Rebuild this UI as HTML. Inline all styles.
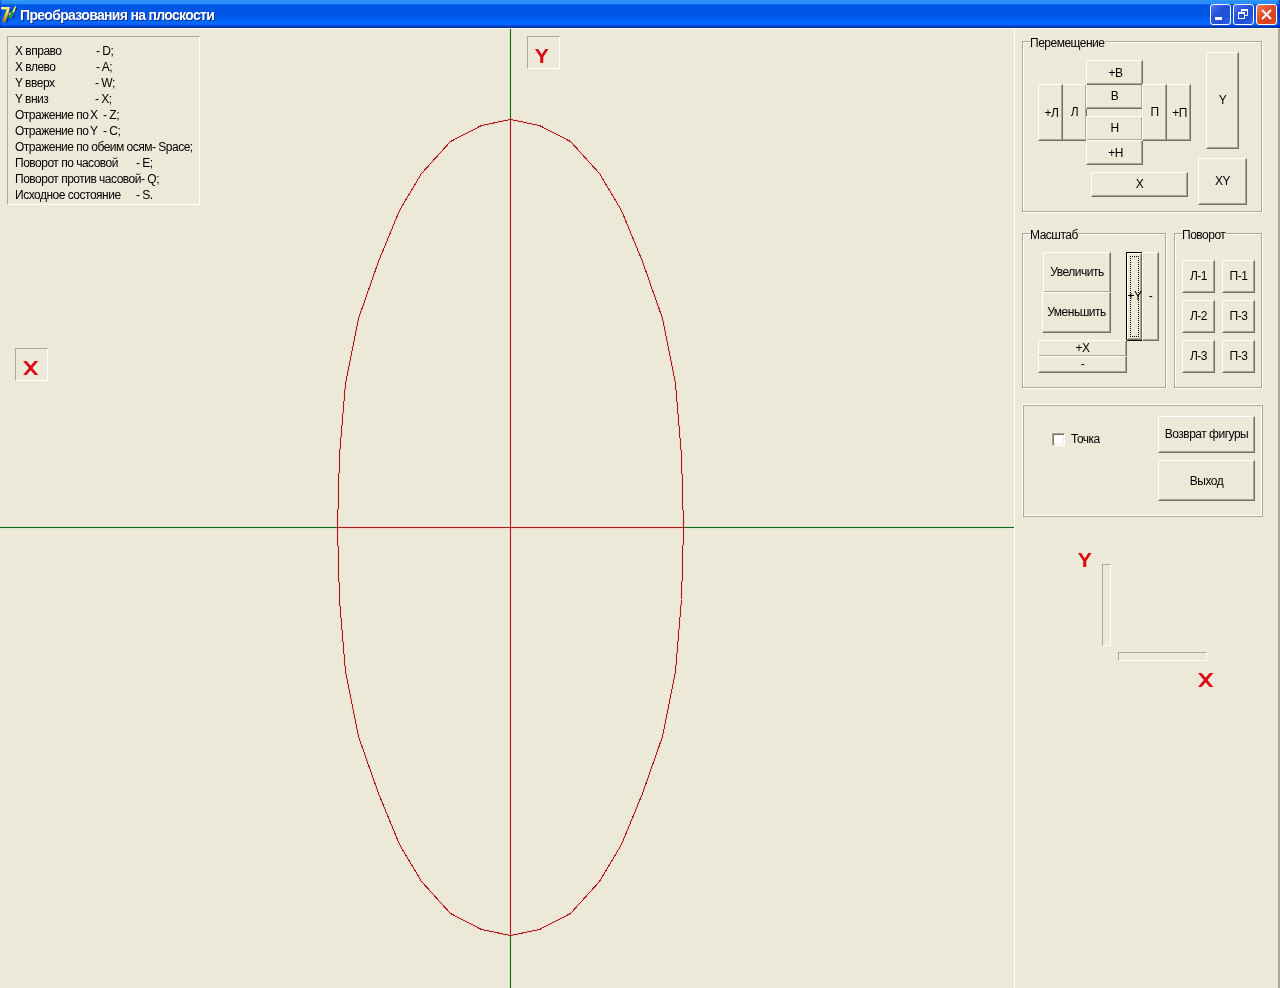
<!DOCTYPE html>
<html><head><meta charset="utf-8">
<style>
html,body{margin:0;padding:0;}
body{width:1280px;height:988px;overflow:hidden;background:#ECE9D8;position:relative;font-family:"Liberation Sans",sans-serif;font-size:12px;letter-spacing:-0.5px;color:#000;}
.abs{position:absolute;}
#title{position:absolute;left:0;top:0;width:1280px;height:28px;background:linear-gradient(to bottom,#3399FF 0.5px,#2486F0 1.5px,#3196FF 2.5px,#2688FA 3.5px,#0A66EE 4.5px,#005AE8 5.5px,#0056E4 6.5px,#0055E2 10.5px,#0057E6 14.5px,#005AEC 17.5px,#0062F6 19.5px,#0068FF 21.5px,#0866FF 23.5px,#0A60F8 24.5px,#0452DE 25.5px,#003ABC 26.5px,#0030A8 27.5px);}
#title .txt{position:absolute;left:20px;top:7px;font-size:14px;line-height:16px;font-weight:bold;color:#fff;text-shadow:1px 1px 0 #0A2F8C;white-space:nowrap;letter-spacing:-0.68px;}
.tb{position:absolute;top:4px;width:21px;height:21px;border-radius:3px;box-sizing:border-box;border:1px solid #fff;}
.tbb{background:linear-gradient(135deg,#5078F0 0%,#2452DC 40%,#2050D8 70%,#3666E8 100%);}
.tbr{background:linear-gradient(135deg,#F08060 0%,#E0502A 40%,#D8401A 70%,#E8501C 100%);}
#lefttop{position:absolute;left:0;top:28px;width:1278px;height:1px;background:#fff;}
#rp{position:absolute;left:1014px;top:28px;width:266px;height:960px;box-sizing:border-box;border-left:1px solid #fff;border-top:1px solid #fff;border-right:2px solid #ACA899;}
.gb{position:absolute;box-sizing:border-box;border:1px solid #ACA899;box-shadow:1px 1px 0 #fff, inset 1px 1px 0 #fff;}
.frame{position:absolute;box-sizing:border-box;border-top:1px solid #fff;border-left:1px solid #fff;border-right:1px solid #ACA899;border-bottom:1px solid #ACA899;box-shadow:inset 1px 1px 0 #ACA899, inset -1px -1px 0 #fff;}
.gbc{position:absolute;background:#ECE9D8;white-space:nowrap;line-height:13px;height:13px;padding:0;}
.btn{position:absolute;box-sizing:border-box;border-top:1px solid #fff;border-left:1px solid #fff;border-right:1px solid #716F64;border-bottom:1px solid #716F64;background:#ECE9D8;}
.btn::before{content:"";position:absolute;left:0;top:0;right:0;bottom:0;border-right:1px solid #ACA899;border-bottom:1px solid #ACA899;}
.btn span{position:absolute;left:0;right:0;line-height:13px;height:13px;text-align:center;white-space:nowrap;}
.foc{border:1px solid #000;overflow:hidden;}
.foc::before{left:0;top:0;right:0;bottom:0;border:1px solid #716F64;border-top-color:#fff;border-left-color:#fff;box-shadow:inset -1px -1px 0 #ACA899;}
.foc::after{content:"";position:absolute;left:3px;top:3px;right:3px;bottom:3px;border:1px dotted #000;}
.sunk{position:absolute;box-sizing:border-box;border-top:1px solid #ACA899;border-left:1px solid #ACA899;border-right:1px solid #fff;border-bottom:1px solid #fff;}
.chk{position:absolute;width:13px;height:13px;box-sizing:border-box;border-top:1px solid #ACA899;border-left:1px solid #ACA899;border-right:1px solid #fff;border-bottom:1px solid #fff;background:#fff;box-shadow:inset 1px 1px 0 #716F64, inset -1px -1px 0 #F1EFE2;}
.ln{position:absolute;white-space:nowrap;line-height:13px;}
.ln,.btn span,.gbc,#title .txt{will-change:transform;}
</style></head><body>
<div id="title">
<svg class="abs" style="left:0;top:0" width="20" height="28" viewBox="0 0 20 28"><defs><linearGradient id="g7" x1="0" y1="0" x2="0" y2="1"><stop offset="0" stop-color="#FFF080"/><stop offset="0.45" stop-color="#F2D22A"/><stop offset="1" stop-color="#A88008"/></linearGradient></defs><path d="M6.4 22.4 L10.4 9.8 L10.6 7.4 L11 10 L7.2 22.6 Z" fill="#101038"/><path d="M1 7 H9.8 L9.4 9.4 L5.4 22 H2 L6.6 9.4 H1 Z" fill="url(#g7)"/><path d="M1 7 H3.5 V8.6 H1 Z" fill="#FFFBD8"/><ellipse cx="10.8" cy="14.8" rx="2" ry="3.7" transform="rotate(28 10.8 14.8)" fill="#2A922A"/><circle cx="9.8" cy="13.8" r="1.4" fill="#B8A094"/><path d="M12.2 12.4 L13.4 9 L15.6 5.8 L16.4 7 L15 9.2 L15.4 10.6 L13.6 12.6 Z" fill="#F4EE58"/><path d="M16 8 L16.9 8.6 L15.6 11.6 L14.2 12.6 L15.6 10.4 Z" fill="#0C0C30"/><path d="M13.2 16.6 L14.4 14.2 L14.6 16.4 L13.2 19 Z" fill="#10103C" opacity="0.85"/><path d="M9 19.5 L11.5 18.6 L9.8 20.6 Z" fill="#10103C" opacity="0.7"/></svg>
<div class="abs" style="left:1277px;top:0;width:3px;height:28px;background:linear-gradient(to right,rgba(0,30,160,0),rgba(0,30,160,0.75))"></div><div class="abs" style="left:0;top:0;width:2px;height:28px;background:linear-gradient(to left,rgba(0,30,160,0),rgba(0,30,160,0.5))"></div><div class="txt">Преобразования на плоскости</div>
<div class="tb tbb" style="left:1210px"><div class="abs" style="left:4px;top:12px;width:7px;height:3px;background:#fff"></div></div>
<div class="tb tbb" style="left:1233px"><svg class="abs" style="left:0;top:0" width="19" height="19"><path d="M7.5 7 V4.5 H13.5 V10.5 H11" fill="none" stroke="#fff" stroke-width="1"/><path d="M7 5 H14" stroke="#fff" stroke-width="2"/><rect x="4.5" y="7.5" width="6" height="6" fill="none" stroke="#fff" stroke-width="1"/><path d="M4 8 H11" stroke="#fff" stroke-width="2"/></svg></div>
<div class="tb tbr" style="left:1256px"><svg class="abs" style="left:0;top:0" width="19" height="19"><path d="M5 5 L14 14 M14 5 L5 14" stroke="#fff" stroke-width="2"/></svg></div>
</div>
<div id="lefttop"></div>
<svg class="abs" style="left:0;top:29px" width="1014" height="959" viewBox="0 29 1014 959" shape-rendering="crispEdges">
<g stroke-width="3" fill="none" opacity="0.6">
<line x1="0" y1="527.5" x2="337" y2="527.5" stroke="#C8F0B8"/><line x1="684" y1="527.5" x2="1014" y2="527.5" stroke="#C8F0B8"/>
<line x1="510.5" y1="29" x2="510.5" y2="119" stroke="#C8F0B8"/><line x1="510.5" y1="936" x2="510.5" y2="988" stroke="#C8F0B8"/>
<line x1="337" y1="527.5" x2="684" y2="527.5" stroke="#FFC8C0"/>
<line x1="510.5" y1="119" x2="510.5" y2="936" stroke="#FFC8C0"/>
<polygon points="510.5,119.5 539.5,125.5 570.5,141.5 599.5,173.5 621.5,210.5 642.5,261.5 662.5,318.5 675.5,383.5 681.5,455.5 683.5,527.5 681.5,599.5 675.5,671.5 662.5,736.5 642.5,793.5 621.5,844.5 599.5,881.5 570.5,913.5 539.5,929.5 510.5,935.5 481.5,929.5 450.5,913.5 421.5,881.5 399.5,844.5 378.5,793.5 358.5,736.5 345.5,671.5 339.5,599.5 337.5,527.5 339.5,455.5 345.5,383.5 358.5,318.5 378.5,261.5 399.5,210.5 421.5,173.5 450.5,141.5 481.5,125.5" stroke="#FFC8C0"/>
</g>
<line x1="0" y1="527.5" x2="1014" y2="527.5" stroke="#1E5E1E" stroke-width="1"/>
<line x1="510.5" y1="29" x2="510.5" y2="988" stroke="#1E5E1E" stroke-width="1"/>
<line x1="337" y1="527.5" x2="684" y2="527.5" stroke="#9E2020" stroke-width="1"/>
<line x1="510.5" y1="119" x2="510.5" y2="936" stroke="#9E2020" stroke-width="1"/>
<polygon points="510.5,119.5 539.5,125.5 570.5,141.5 599.5,173.5 621.5,210.5 642.5,261.5 662.5,318.5 675.5,383.5 681.5,455.5 683.5,527.5 681.5,599.5 675.5,671.5 662.5,736.5 642.5,793.5 621.5,844.5 599.5,881.5 570.5,913.5 539.5,929.5 510.5,935.5 481.5,929.5 450.5,913.5 421.5,881.5 399.5,844.5 378.5,793.5 358.5,736.5 345.5,671.5 339.5,599.5 337.5,527.5 339.5,455.5 345.5,383.5 358.5,318.5 378.5,261.5 399.5,210.5 421.5,173.5 450.5,141.5 481.5,125.5" fill="none" stroke="#9E2020" stroke-width="1"/>
</svg>
<div class="sunk" style="left:7px;top:36px;width:193px;height:169px;"></div>
<div class="ln" style="left:15px;top:45px">X вправо</div><div class="ln" style="left:96px;top:45px">- D;</div><div class="ln" style="left:15px;top:61px">X влево</div><div class="ln" style="left:96px;top:61px">- A;</div><div class="ln" style="left:15px;top:77px">Y вверх</div><div class="ln" style="left:95px;top:77px">- W;</div><div class="ln" style="left:15px;top:93px">Y вниз</div><div class="ln" style="left:95px;top:93px">- X;</div><div class="ln" style="left:15px;top:109px">Отражение по</div><div class="ln" style="left:90px;top:109px">X</div><div class="ln" style="left:103px;top:109px">- Z;</div><div class="ln" style="left:15px;top:125px">Отражение по</div><div class="ln" style="left:90px;top:125px">Y</div><div class="ln" style="left:103px;top:125px">- C;</div><div class="ln" style="left:15px;top:141px">Отражение по обеим осям- Space;</div><div class="ln" style="left:15px;top:157px">Поворот по часовой</div><div class="ln" style="left:136px;top:157px">- E;</div><div class="ln" style="left:15px;top:173px">Поворот против часовой- Q;</div><div class="ln" style="left:15px;top:189px">Исходное состояние</div><div class="ln" style="left:136px;top:189px">- S.</div>
<div class="sunk" style="left:527px;top:36px;width:33px;height:33px;"></div>
<div class="sunk" style="left:15px;top:348px;width:33px;height:33px;"></div>
<div id="rp"></div>
<div class="gb" style="left:1022px;top:41px;width:240px;height:171px"></div><div class="gbc" style="left:1030px;top:37px">Перемещение</div><div class="btn" style="left:1166px;top:84px;width:25px;height:57px;"><span style="top:22px;left:2px">+П</span></div><div class="btn" style="left:1062px;top:84px;width:25px;height:57px;"><span style="top:21px;">Л</span></div><div class="btn" style="left:1038px;top:84px;width:25px;height:57px;"><span style="top:22px;left:2px">+Л</span></div><div class="btn" style="left:1086px;top:84px;width:57px;height:25px;"><span style="top:5px;">В</span></div><div class="btn" style="left:1086px;top:116px;width:57px;height:25px;"><span style="top:5px;">Н</span></div><div class="btn" style="left:1086px;top:60px;width:57px;height:25px;"><span style="top:6px;left:2px">+В</span></div><div class="btn" style="left:1086px;top:140px;width:57px;height:25px;"><span style="top:6px;left:2px">+Н</span></div><div class="btn" style="left:1142px;top:84px;width:25px;height:57px;"><span style="top:21px;">П</span></div><div class="btn" style="left:1206px;top:52px;width:33px;height:97px;"><span style="top:41px;">Y</span></div><div class="btn" style="left:1198px;top:158px;width:49px;height:47px;"><span style="top:16px;">XY</span></div><div class="btn" style="left:1091px;top:172px;width:97px;height:25px;"><span style="top:5px;">X</span></div><div class="gb" style="left:1022px;top:233px;width:144px;height:155px"></div><div class="gbc" style="left:1030px;top:229px">Масштаб</div><div class="btn" style="left:1043px;top:252px;width:68px;height:41px;"><span style="top:13px;">Увеличить</span></div><div class="btn" style="left:1042px;top:292px;width:69px;height:41px;"><span style="top:13px;">Уменьшить</span></div><div class="btn foc" style="left:1126px;top:252px;width:17px;height:89px;"><span style="top:37px;">+Y</span></div><div class="btn" style="left:1142px;top:252px;width:17px;height:89px;"><span style="top:37px;">-</span></div><div class="btn" style="left:1038px;top:340px;width:89px;height:17px;"><span style="top:1px;">+X</span></div><div class="btn" style="left:1038px;top:356px;width:89px;height:17px;"><span style="top:1px;">-</span></div><div class="gb" style="left:1174px;top:233px;width:88px;height:155px"></div><div class="gbc" style="left:1182px;top:229px">Поворот</div><div class="btn" style="left:1182px;top:260px;width:33px;height:33px;"><span style="top:9px;">Л-1</span></div><div class="btn" style="left:1222px;top:260px;width:33px;height:33px;"><span style="top:9px;">П-1</span></div><div class="btn" style="left:1182px;top:300px;width:33px;height:33px;"><span style="top:9px;">Л-2</span></div><div class="btn" style="left:1222px;top:300px;width:33px;height:33px;"><span style="top:9px;">П-3</span></div><div class="btn" style="left:1182px;top:340px;width:33px;height:33px;"><span style="top:9px;">Л-3</span></div><div class="btn" style="left:1222px;top:340px;width:33px;height:33px;"><span style="top:9px;">П-3</span></div><div class="frame" style="left:1022px;top:404px;width:241px;height:113px"></div><div class="chk" style="left:1052px;top:433px"></div><div class="ln" style="left:1071px;top:433px">Точка</div><div class="btn" style="left:1158px;top:416px;width:97px;height:37px;"><span style="top:11px;">Возврат фигуры</span></div><div class="btn" style="left:1158px;top:460px;width:97px;height:41px;"><span style="top:14px;">Выход</span></div><div class="sunk" style="left:1102px;top:564px;width:9px;height:82px"></div><div class="sunk" style="left:1118px;top:652px;width:89px;height:9px"></div>
<svg class="abs" style="left:534.8px;top:49.0px;overflow:visible" width="15" height="16"><path d="M0 0 H3.26 L6.75 5.60 L10.24 0 H13.50 L8.30 8.12 V14.00 H5.20 V8.12 Z" fill="#DC0A14"/></svg><svg class="abs" style="left:22.9px;top:361.0px;overflow:visible" width="17" height="16"><path d="M0.00 0.00 L3.60 0.00 L7.65 4.85 L11.70 0.00 L15.30 0.00 L9.45 7.00 L15.30 14.00 L11.70 14.00 L7.65 9.15 L3.60 14.00 L0.00 14.00 L5.85 7.00 Z" fill="#DC0A14"/></svg><svg class="abs" style="left:1077.7px;top:552.8px;overflow:visible" width="15" height="16"><path d="M0 0 H3.26 L6.75 5.60 L10.24 0 H13.50 L8.30 8.12 V14.00 H5.20 V8.12 Z" fill="#DC0A14"/></svg><svg class="abs" style="left:1197.8px;top:673.0px;overflow:visible" width="17" height="16"><path d="M0.00 0.00 L3.60 0.00 L7.65 4.85 L11.70 0.00 L15.30 0.00 L9.45 7.00 L15.30 14.00 L11.70 14.00 L7.65 9.15 L3.60 14.00 L0.00 14.00 L5.85 7.00 Z" fill="#DC0A14"/></svg>
</body></html>
